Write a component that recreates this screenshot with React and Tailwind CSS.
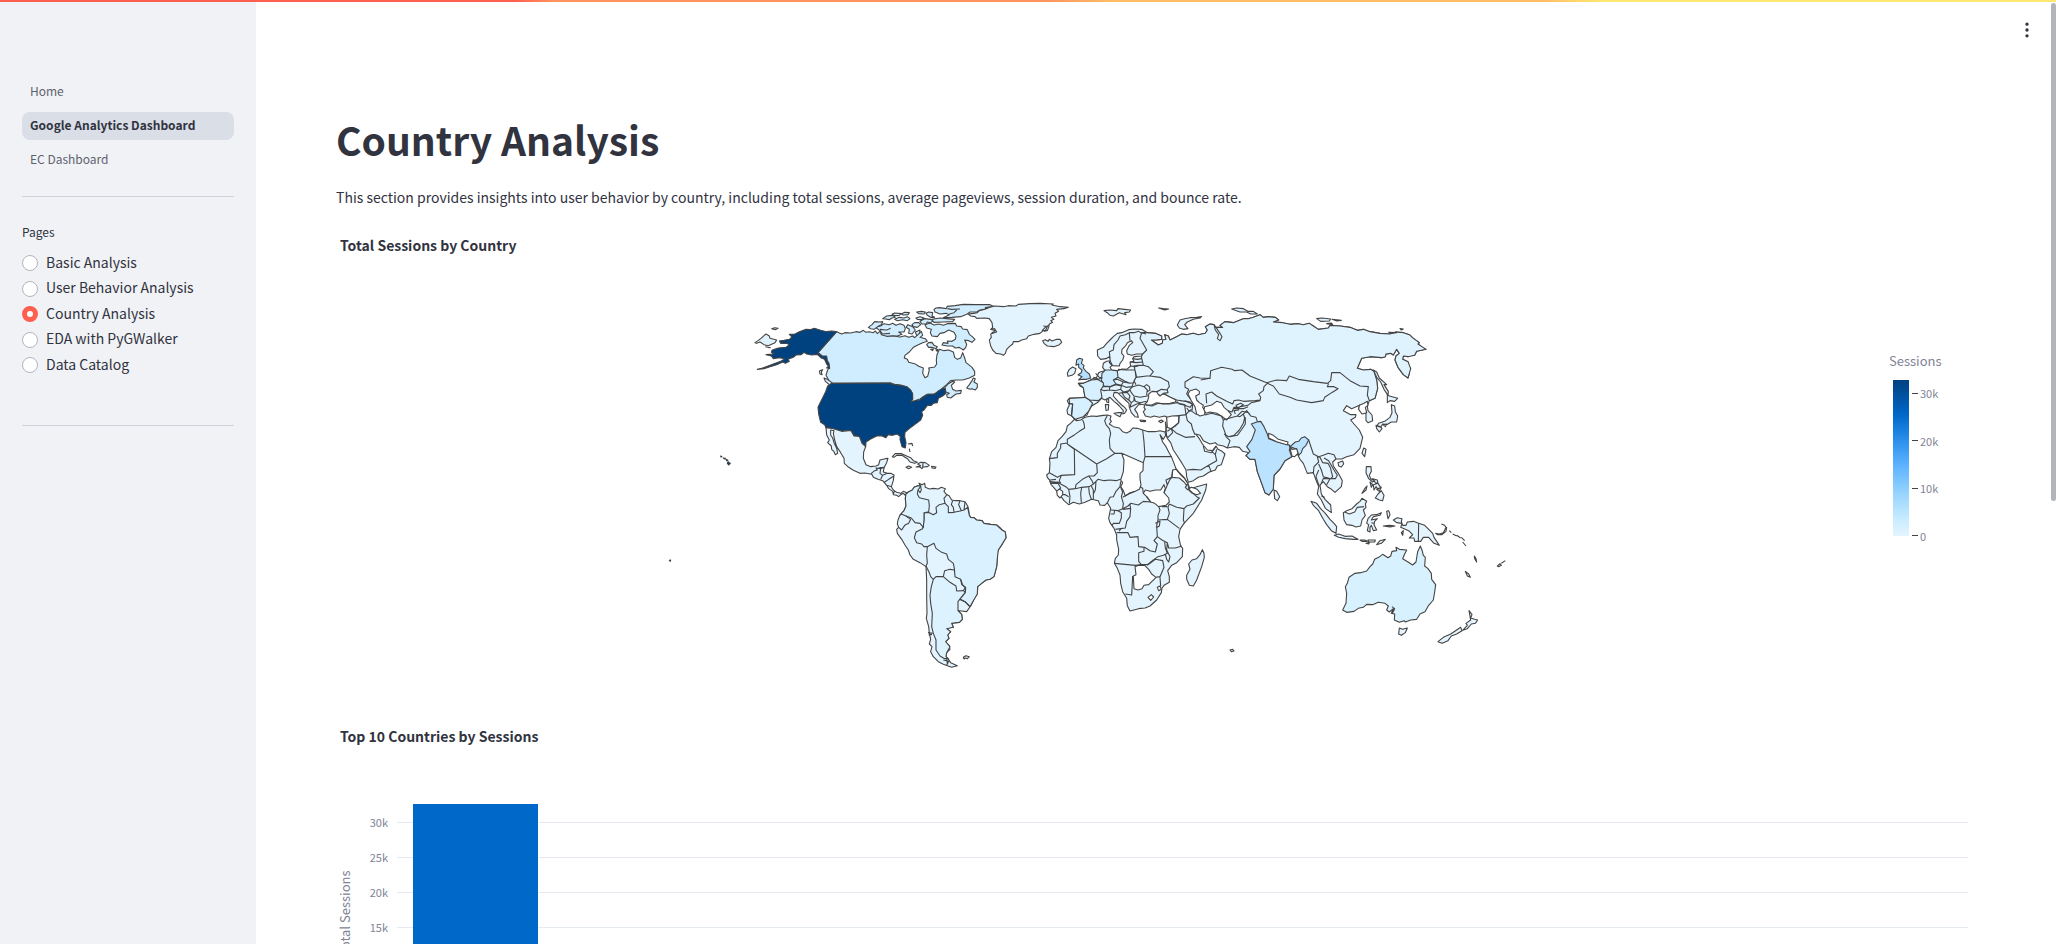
import React, { useState } from 'react';
import { MoreVertical } from 'lucide-react';

const LAND = '#e3f4ff';
const RUSSIA = '#dff3ff';
const BRAZIL = '#daf1ff';
const CANADA = '#d0edff';
const INDIA = '#bbe2ff';
const UK = '#b5dfff';
const GERMANY = '#cdebff';
const USA = '#004280';
const EMPTY = '#ffffff';

// Every region has its own origin on the map; paths are in thirds of a pixel.
const regions = [
  {
    name: 'arctic',
    x: 860,
    y: 290,
    shapes: [
      [CANADA, 'M222 58L228 54L240 53L258 56L262 49L285 47L310 43L345 44L390 44L400 49L376 53L384 56L360 60L350 66L330 66L322 72L302 80L275 82L250 83L268 74L258 70L240 72L225 66Z M262 56L275 58L300 57 M268 72L282 68L290 60'],
      [CANADA, 'M195 104L210 99L222 105L236 102L250 106L262 101L286 100L290 108L304 110L308 117L322 119L328 133L336 139L345 148L336 157L326 152L314 150L320 163L317 173L310 180L298 172L286 174L278 168L262 168L246 165L250 158L264 160L262 153L276 154L286 148L288 138L282 127L266 120L252 128L240 130L232 140L216 138L211 128L214 118L200 114Z'],
      [CANADA, 'M45 111L62 108L72 101L88 104L98 100L108 106L120 101L132 106L136 116L132 126L116 126L126 133L112 138L95 138L82 140L62 138L66 130L60 122Z M60 118L80 120L92 115 M66 132L90 130'],
      [CANADA, 'M25 112L36 104L44 95L60 96L68 95L64 104L56 108L42 118L32 116Z'],
      [CANADA, 'M68 86L80 78L98 76L106 82L96 84L88 89L76 87Z M96 73L104 69L124 71L118 76L104 77Z M124 72L134 67L148 68L144 74L130 75Z M104 88L118 82L132 84L142 80L150 86L142 92L128 89L112 92Z M170 66L184 64L196 66L192 72L176 71Z M198 70L206 66L218 68L216 78L224 82L212 82L202 76Z M168 84L180 80L192 84L184 89L172 88Z M156 104L164 98L176 98L182 104L172 112L160 110Z M180 94L194 86L212 88L220 92L212 98L202 96L198 102L186 102Z M144 104L158 110L166 120L156 132L146 130L148 118L138 112Z M166 126L180 120L178 134L170 137Z'],
      [CANADA, 'M215 88L240 84L260 86L284 88L278 95L250 96L222 97Z'],
      [CANADA, 'M200 164L206 158L216 157L222 166L232 170L228 176L216 172L206 172Z M212 178L220 177L218 182Z M228 180L234 178L232 184Z'],
    ],
  },
  {
    name: 'north-america',
    x: 660,
    y: 290,
    shapes: [
      [CANADA, 'M530 125L538 129L545 132L555 128L572 129L588 125L600 127L610 121L618 127L628 125L640 128L646 123L652 131L660 124L664 134L680 139L700 138L720 141L735 137L746 142L758 138L764 143L774 134L784 124L788 136L780 142L796 146L802 154L788 158L775 164L760 172L748 186L735 196L733 204L742 208L746 217L764 221L776 229L790 234L788 250L795 263L803 259L808 240L806 234L824 231L830 222L829 210L831 194L838 178L852 182L866 180L880 186L884 202L892 208L902 204L908 188L914 204L918 218L926 224L936 232L944 244L944 256L928 264L908 270L890 270L872 272L860 284L848 294L840 304L820 313L800 313L780 327L752 337L758 325L756 308L740 290L725 286L708 284L692 279L515 280L506 270L498 256L503 240L508 234L499 215L486 198L474 188Z'],
      [CANADA, 'M845 296L854 294L864 282L878 274L884 276L874 286L878 298L888 303L904 301L902 310L888 312L872 324L862 322L860 314L868 310L858 306Z'],
      [CANADA, 'M920 294L928 284L936 272L940 264L946 266L942 276L952 282L952 292L946 300L936 296L930 298Z'],
      [CANADA, 'M492 264L502 268L516 278L518 287L508 284L496 274Z M478 243L488 239L484 246L486 254L480 252Z'],
      [USA, 'M530 125L514 123L500 125L482 121L463 115L450 119L438 118L418 125L405 132L388 133L396 141L388 148L372 151L358 153L362 160L380 160L388 164L378 172L355 174L337 180L334 187L342 192L318 194L334 198L340 206L358 203L374 206L362 214L350 218L330 226L305 235L292 238L312 236L330 230L350 224L368 216L376 220L388 214L384 208L400 202L408 195L424 194L432 187L440 192L455 195L472 193L484 204L494 208L500 222L506 228L500 234L509 235L507 220L502 212L500 198L486 198L474 188Z'],
      [USA, 'M515 280L692 279L696 283L708 284L725 287L740 290L752 300L758 312L758 328L752 337L766 332L780 330L790 320L805 313L825 312L835 303L845 297L856 295L858 310L848 318L835 325L832 338L820 340L814 346L802 346L792 360L785 365L788 376L782 390L765 403L745 418L735 427L734 440L738 458L736 474L726 470L720 448L721 440L712 432L698 436L684 434L678 443L664 437L650 438L632 447L618 456L617 470L608 463L600 443L590 437L585 442L575 424L562 422L545 424L515 415L498 413L494 404L482 397L476 372L474 352L482 335L497 305L503 288Z'],
      [LAND, 'M498 413L515 415L545 424L572 421L582 438L598 439L606 460L617 470L611 486L610 505L618 524L632 530L648 528L656 524L660 510L676 506L684 505L680 518L672 533L660 533L652 538L642 552L630 552L615 549L600 550L580 541L566 532L553 520L552 505L542 488L530 470L524 450L520 430L522 422L512 420L512 435L518 444L522 458L530 475L533 490L526 494L522 485L515 478L514 468L503 458L508 450L500 435Z'],
      [RUSSIA, 'M285 158L294 152L303 145L312 137L318 132L328 138L330 145L350 150L345 158L325 167L312 164L300 156L290 160Z M335 116L344 113L354 115L346 119Z M316 170L324 172L332 173'],
    ],
  },
  {
    name: 'central-america',
    x: 640,
    y: 420,
    shapes: [
      [LAND, 'M694 160L704 152L712 150L708 144L722 146L732 142L730 156L742 160L752 160L762 165L760 182L754 200L760 210L770 217L782 220L790 214L800 218L798 228L790 220L782 224L776 230L770 226L760 224L758 214L746 206L740 196L728 182L714 178L700 172Z M722 146L720 160L728 166L722 178 M728 166L742 160 M734 186L746 178L762 168 M740 196L755 200 M764 212L760 222'],
      [LAND, 'M757 110L766 101L785 101L800 108L812 113L820 122L832 127L824 130L810 126L802 116L786 106L770 106L762 112Z'],
      [LAND, 'M833 132L842 127L856 128L868 136L862 140L850 141L846 146L840 141L828 141L842 137Z M849 129L848 142'],
      [LAND, 'M798 142L806 138L815 142L806 146Z M875 139L888 141L886 145L876 144Z M804 72L816 70L818 78 M808 86L810 96'],
      [USA, 'M242 108L246 110L243 111Z M250 114L256 115L254 117Z M258 118L264 121L260 122Z M264 125L271 130L266 135L262 130Z'],
      [EMPTY, 'M88 421L92 420L91 424Z'],
    ],
  },
  {
    name: 'south-america',
    x: 800,
    y: 470,
    shapes: [
      [LAND, 'M318 72L325 66L337 60L342 52L354 47L362 49L357 40L366 44L374 40L376 52L388 57L400 55L415 57L424 52L436 56L432 64L438 72L448 78L455 90L466 92L480 92L495 95L503 108L506 120L508 136L512 142L522 143L530 150L546 152L552 160L572 163L590 165L600 173L606 180L616 186L618 203L608 220L595 240L592 250L592 265L590 290L582 320L570 328L558 330L545 340L533 350L532 372L524 382L520 392L512 408L500 425L484 423L474 422L485 433L487 448L478 457L460 458L455 460L460 472L448 472L440 476L452 485L443 495L447 505L437 515L436 522L447 526L450 538L440 548L438 560L444 566L452 578L472 587L455 592L430 583L415 575L400 560L392 545L396 530L388 522L392 508L388 490L386 470L379 445L381 430L380 380L380 330L378 290L360 278L340 268L330 255L325 240L315 225L305 208L292 190L290 178L296 172L292 162L294 150L300 135L312 122L318 108L316 85Z'],
      [BRAZIL, 'M372 128L388 128L400 134L410 128L408 112L418 104L435 100L445 110L445 128L462 127L484 122L492 120L503 112L508 136L512 142L522 143L530 150L546 152L552 160L572 163L590 165L606 180L616 186L618 203L608 220L595 240L592 265L590 290L582 320L570 328L558 330L545 340L533 350L532 372L520 392L510 410L495 395L480 387L496 368L497 354L488 345L482 328L465 320L463 295L460 280L445 268L440 252L425 247L408 235L402 220L382 230L372 230L365 222L350 218L343 203L348 186L368 176L372 150Z'],
      ['#dcf2ff', 'M318 72L325 66L337 60L342 52L354 47L362 49L354 60L352 72L358 83L386 90L388 108L386 125L372 128L372 150L370 172L360 160L345 158L334 144L318 138L305 133L300 135L312 122L318 108L316 85Z'],
      ['#dcf2ff', 'M400 328L408 320L430 320L450 337L468 348L470 363L490 362L496 366L474 395L474 422L485 433L487 448L478 457L455 460L460 472L440 476L452 485L443 495L447 505L437 515L450 530L440 548L438 560L444 566L434 566L420 558L408 540L408 510L400 490L395 470L397 430L392 400L390 375L394 350Z'],
      ['none', 'M296 172L305 180L314 166L326 160L332 148L318 138 M382 230L380 255L382 280L378 288L388 308L392 320L400 328 M430 320L434 302L450 298L463 300 M482 328L485 343L497 352L490 362 M478 388L495 395L508 408 M435 100L432 85L440 75 M458 92L454 104L460 112L462 127 M480 92L476 104L484 122 M495 96L492 120 M440 566L442 582 M430 570L446 574L440 586 M384 488L398 490 M386 494L396 494 M362 49L364 60L360 68L354 60'],
      [LAND, 'M490 562L498 557L508 560L502 566L496 564L492 567Z'],
    ],
  },
  {
    name: 'greenland',
    x: 960,
    y: 290,
    shapes: [
      [LAND, 'M25 72L40 70L52 68L58 62L75 58L90 52L104 48L130 50L145 47L168 48L175 43L210 41L240 40L280 42L276 45L300 50L325 52L312 56L290 58L296 64L285 70L288 78L274 82L282 88L272 92L278 97L268 102L266 112L262 122L250 122L240 130L222 133L205 138L200 146L185 150L175 155L160 155L158 162L148 170L140 178L136 190L130 196L122 192L108 190L98 180L92 168L88 150L94 142L92 132L110 126L104 116L92 118L98 112L96 98L88 86L75 84L50 85L45 80L32 78Z M92 118L106 122L94 130 M246 122L256 112L268 104 M250 108L262 110L254 126'],
      [LAND, 'M248 152L256 149L264 154L268 148L276 153L290 148L300 148L305 157L298 164L282 170L262 168L252 160Z'],
    ],
  },
  {
    name: 'eurasia',
    x: 1030,
    y: 290,
    shapes: [
      [LAND, 'M202 180L203 198L212 208L228 206L238 200L242 216L248 227L268 228L270 220L278 210L282 198L275 190L276 178L288 166L292 158L304 152L308 158L298 166L290 182L292 192L305 196L320 192L338 192L334 198L312 200L308 206L312 214L300 216L302 228L290 238L276 237L262 242L245 240L240 232L246 226L238 218L240 212L230 214L220 220L218 232L225 242L212 245L206 248L200 262L185 268L170 276L160 280L145 280L150 288L160 293L162 305L165 322L150 325L134 324L118 325L112 332L118 345L111 360L113 372L125 378L136 390L142 384L160 380L172 374L175 365L185 348L205 336L214 325L225 330L240 322L252 334L262 342L268 348L280 362L278 372L284 370L290 360L284 352L275 345L264 334L250 318L252 308L262 308L275 320L286 330L297 340L298 352L304 368L315 380L325 382L322 370L314 358L328 342L345 345L342 352L346 358L340 365L346 378L362 382L372 378L388 382L404 378L411 382L412 400L408 420L405 428L412 445L422 458L430 480L442 498L455 518L468 540L470 560L475 577L490 572L505 562L520 558L538 546L556 540L562 528L574 524L585 492L576 484L564 478L558 468L548 482L532 480L522 468L516 460L508 446L497 432L510 436L520 452L540 462L556 458L562 464L580 468L592 474L612 470L628 472L638 484L658 488L648 497L660 508L675 508L682 545L695 580L705 608L717 615L730 597L732 556L750 537L765 512L785 500L802 492L810 508L820 520L832 550L850 548L858 570L866 590L862 612L874 630L886 655L904 668L902 645L885 628L874 612L870 585L880 575L892 590L902 596L915 607L934 590L937 572L925 550L910 528L908 516L918 507L935 507L950 500L972 494L990 475L998 442L988 420L972 402L962 390L976 382L978 374L962 374L940 362L950 347L965 356L990 345L986 356L1008 370L1008 392L1014 398L1028 392L1026 375L1014 362L1012 348L1018 332L1035 325L1043 295L1040 270L1032 244L1022 238L1000 240L982 235L995 205L1020 200L1055 203L1066 200L1068 192L1082 190L1090 195L1100 178L1108 190L1098 198L1095 210L1104 232L1120 254L1134 264L1138 250L1134 246L1142 236L1136 228L1134 215L1118 208L1120 198L1134 200L1142 195L1154 196L1160 184L1188 178L1174 172L1164 162L1168 158L1150 145L1138 134L1120 128L1098 126L1080 132L1050 130L1020 125L1000 118L982 121L960 112L930 108L900 106L895 114L865 118L850 108L838 100L820 104L805 101L780 103L758 98L730 96L746 90L736 82L715 80L700 82L690 74L670 82L655 86L640 86L610 98L585 95L570 106L578 112L558 112L552 104L540 102L526 110L532 120L526 130L505 134L490 130L470 134L455 132L440 140L420 150L415 138L404 134L408 148L398 150L397 160L385 165L364 150L378 150L395 148L395 138L376 130L352 128L335 118L312 117L296 119L275 128L262 130L250 140L240 150L230 160L220 172Z'],
      [RUSSIA, 'M335 128L330 145L350 180L338 192L334 200L340 226L355 230L370 245L360 258L390 262L415 275L418 290L410 300L400 310L420 322L440 330L466 334L488 342L495 340L480 325L470 312L476 298L465 292L465 276L490 260L510 264L540 265L542 242L575 232L606 238L614 242L636 240L660 258L710 278L740 270L770 272L778 258L805 268L850 275L892 280L902 272L905 248L930 248L960 272L990 288L1015 290L1012 315L1018 332L1035 325L1043 295L1040 270L1032 244L1022 238L1000 240L982 235L995 205L1020 200L1055 203L1066 200L1068 192L1082 190L1090 195L1100 178L1108 190L1098 198L1095 210L1104 232L1120 254L1134 264L1138 250L1142 236L1134 215L1118 208L1120 198L1134 200L1154 196L1160 184L1188 178L1164 162L1168 158L1150 145L1138 134L1120 128L1098 126L1080 132L1050 130L1020 125L1000 118L982 121L960 112L930 108L900 106L895 114L865 118L850 108L838 100L820 104L805 101L780 103L758 98L730 96L746 90L736 82L715 80L700 82L690 74L670 82L655 86L640 86L610 98L585 95L570 106L578 112L558 112L570 130L576 140L570 152L562 146L566 134L556 120L552 104L540 102L526 110L532 120L526 130L505 134L490 130L470 134L455 132L440 140L420 150L415 138L404 134L408 148L398 150L397 160L385 165L364 150L378 150L395 148L395 138L376 130L352 128Z'],
      [EMPTY, 'M352 335L356 322L356 312L366 304L378 305L385 303L386 314L402 312L418 320L438 330L436 336L420 340L400 342L380 338L365 345L350 345L345 342Z'],
      [LAND, 'M380 306L394 298L412 300L414 308L400 310L390 318L384 312Z'],
      [EMPTY, 'M474 312L480 302L498 297L508 304L508 312L497 318L500 330L508 338L520 346L518 352L525 362L524 374L510 378L500 372L495 350L484 332Z'],
      [EMPTY, 'M524 350L545 345L560 334L574 338L582 352L594 362L604 374L590 390L574 378L560 370L540 366L528 370L522 360Z'],
      [EMPTY, 'M410 382L426 378L447 377L446 398L436 408L422 416L412 412Z'],
      [EMPTY, 'M988 346L1002 340L1012 334L1014 346L1006 352L1010 368L996 372L986 358Z'],
      [INDIA, 'M678 397L692 394L702 410L712 432L716 446L740 455L776 464L780 470L796 456L806 454L814 444L824 440L836 450L828 466L818 476L814 488L806 496L800 478L782 470L778 480L785 500L765 512L750 537L732 556L730 597L717 615L705 608L695 580L682 545L675 508L660 508L648 497L660 484L650 470L666 448L676 420L664 402Z'],
      [EMPTY, 'M716 430L730 436L745 448L774 456L772 465L740 455L716 444Z M778 466L786 478L800 476L804 490L794 500L786 498Z'],
      [GERMANY, 'M216 250L226 240L244 240L262 243L264 262L250 270L258 282L240 290L222 288L214 270Z'],
      ['#d6f0ff', 'M145 280L160 280L184 270L202 268L220 278L220 288L212 300L216 322L205 332L178 330L165 322L162 305L160 293Z'],
      ['#d6f0ff', 'M118 325L165 322L178 330L188 340L175 365L160 380L136 388L125 378L128 342L118 342Z'],
      [UK, 'M140 210L148 205L158 208L154 220L162 226L160 234L168 244L178 252L182 264L170 268L158 268L146 270L156 260L144 254L154 248L156 240L146 232L146 222L138 226Z'],
      [LAND, 'M118 238L128 231L138 236L134 250L126 256L114 259L112 250Z'],
      ['none', 'M240 205L238 185L250 180L252 164L264 150L270 138L286 134L298 128L312 128L326 124L335 130 M298 130L300 152 M335 128L348 132 M118 340L128 342L124 376 M197 250L208 262L218 264 M190 262L206 268L216 262 M264 238L290 240L315 240L318 262L310 278L300 280L285 274L264 262 M250 270L262 268L280 276L274 286L258 282 M280 276L300 280L310 278L306 290L288 292L274 286 M218 290L240 290L238 300L222 302L212 298 M240 290L258 284L274 288L272 298L256 302L238 300 M272 298L280 306L296 302L308 290 M308 290L326 285L342 290L352 300L350 312L352 318L330 322L312 318L304 308L300 300 M342 290L350 284L358 290L360 300L350 306 M318 262L312 272L318 284 M318 262L350 258L360 258 M315 240L312 228L324 226L340 226 M320 262L316 244 M308 206L322 208L336 206 M300 216L318 218L338 216 M302 228L316 230L330 226 M312 320L316 334L330 338L350 334 M300 300L290 308L276 308L266 310 M276 308L284 322L296 330L300 318L292 308 M296 330L304 338L312 332L312 320 M304 338L300 352L308 348L320 342L330 340 M330 340L330 346 M348 345L366 348L385 340L420 342L440 338L466 344 M440 334L448 342L464 346L468 374L447 377 M464 346L480 352L486 344 M464 332L480 336L488 344L486 362 M470 354L478 364L484 358 M468 374L478 362L486 364L500 374 M468 374L472 392L484 402L488 418L495 434 M447 377L446 398L424 416L412 424 M424 416L440 430L466 442L495 440 M424 416L428 428L414 442L408 438 M406 395L410 440 M470 540L490 538L512 540L536 526L544 546 M536 526L560 512L556 494L545 484 M556 494L560 478 M520 468L524 484L544 488L558 470 M525 375L545 370L574 378L580 390L578 408L586 430L588 440L600 452L592 474'],
      ['none', 'M580 390L600 384L622 378L630 380L640 372L644 384L640 400L628 420L612 436L596 440L582 432 M540 265L512 270 M530 340L528 312L545 306L560 318L590 334L608 342L612 332L626 330L640 334L676 332L690 330 M594 362L606 366L612 352L628 352L640 344L632 340L618 346L626 360L612 362L616 372 M632 350L654 346L664 338L690 332L692 322L686 312L700 302L702 290L712 280 M640 372L650 362L662 378L678 382L682 394L694 396 M646 382L646 402L634 420L622 436L600 440 M610 356L640 356L654 350 M622 378L636 364L656 368L662 378 M712 280L730 288L748 312L780 322L800 330L845 338L880 332L884 322L905 308L924 296L912 290L892 290L896 280 M836 450L844 474L850 492L866 500L880 496L895 490L912 494L918 507 M850 550L852 530L866 516L862 500L870 502L878 518L894 520L902 535L904 545L908 560L902 566L880 560L874 540L866 522 M874 580L880 565L900 566L890 584 M902 566L916 566L922 556L912 540L896 512L882 504 M866 540L858 560L868 590 M874 618L884 622'],
      [LAND, 'M442 105L450 90L464 86L480 83L500 82L515 80L510 84L490 88L472 96L464 104L474 116L460 118L448 114Z M222 62L240 60L260 62L264 56L284 58L302 60L298 66L284 68L288 74L268 68L250 78L240 76L232 68Z M386 54L400 56L416 57L404 60Z'],
      [LAND, 'M252 370L262 368L275 368L270 380L258 374Z M226 344L236 344L235 360L228 361Z M230 328L236 326L236 338L230 336Z M330 390L347 392L346 395L332 394Z M386 394L394 390L400 394L392 398Z'],
    ],
  },
  {
    name: 'africa',
    x: 1030,
    y: 290,
    shapes: [
      [LAND, 'M133 388L140 392L152 390L165 382L185 378L200 379L220 376L232 375L243 378L240 388L244 394L238 402L250 410L268 414L278 425L290 429L300 424L308 414L322 415L338 420L355 425L375 425L390 422L405 426L407 436L400 448L390 434L398 456L408 470L418 490L425 502L432 520L438 536L450 550L462 562L474 582L480 596L500 590L530 582L527 600L515 630L490 670L462 700L450 718L446 740L452 768L458 775L457 800L440 818L425 826L413 842L418 860L418 877L402 886L396 894L394 908L380 930L360 948L345 954L326 956L300 963L292 947L290 925L278 905L272 880L270 855L262 835L253 820L256 805L265 795L266 778L260 750L260 735L252 715L240 698L236 685L240 665L242 655L232 638L224 646L210 645L205 632L185 628L165 637L148 642L130 637L116 644L102 632L88 612L76 598L62 582L60 572L52 562L50 555L58 548L60 520L58 507L65 485L78 472L84 452L96 440L108 425L112 408L124 398Z'],
      [EMPTY, 'M275 490L340 518L339 542L330 550L330 566L333 585L328 598L316 604L300 608L286 618L280 602L272 590L278 578L272 570L280 545L282 510Z'],
      [EMPTY, 'M346 600L360 604L376 600L392 600L402 584L406 596L402 608L416 624L418 636L408 646L386 650L374 640L362 636L350 620L340 610Z'],
      [EMPTY, 'M428 540L438 538L450 552L464 566L474 582L470 586L462 576L448 564L426 562Z'],
      [EMPTY, 'M475 598L484 592L500 597L512 610L500 614L484 608Z'],
      [EMPTY, 'M315 830L326 826L344 826L356 838L365 852L378 862L366 874L356 884L342 886L336 896L324 900L312 896L310 858L318 854Z'],
      [EMPTY, 'M354 922L364 914L371 921L362 931Z M382 892L390 888L394 898L386 902Z'],
      [EMPTY, 'M80 604L88 597L98 604L98 614L90 624L82 616Z'],
      ['none', 'M158 390L162 400L164 414L148 424L134 434L112 448L112 462 M112 459L92 462L92 474L82 490L82 503L58 506 M112 462L200 522L230 506L255 490L275 490 M112 462L133 478L134 554L94 556L82 562L58 548 M94 556L88 572L92 580 M232 376L224 392L228 404L238 416L242 430L238 450L240 475L248 484L255 490 M338 420L342 455L345 500L340 518 M345 500L425 500 M200 522L202 548L192 558L176 558L160 566L150 574L138 584L136 596 M176 558L186 572L190 582L178 590L155 592L136 596L116 598L110 592L92 582L84 576L62 578 M155 592L152 610L154 638 M176 590L178 610L184 628 M184 588L190 600L190 628 M190 582L198 574L204 568L222 572L240 570L258 572L272 568 M198 574L196 600L190 612L190 628 M272 574L270 590L258 604L250 620L240 622L232 638 M116 598L120 620L118 640 M60 570L78 568 M58 575L76 576 M62 580L84 580L92 594L88 598 M98 614L106 614L116 620 M272 592L278 606L274 620L280 640L278 656L264 662L242 660'],
      ['none', 'M278 622L296 612L316 604 M340 610L338 595L330 590 M350 620L362 636L340 634L325 645L302 640L294 648L278 656 M412 585L408 570L425 562L428 540 M402 608L412 585L420 568L426 562 M474 586L478 600L500 620L508 624L490 642L470 648L462 656L440 652L418 642 M470 586L466 592L474 600 M462 656L460 690L464 700 M418 642L414 652L418 670L412 688L448 715 M386 650L390 660L384 676L384 690L412 688 M412 650L396 650 M376 700L390 694L388 708L378 714 M384 690L380 706L382 740L396 750L412 758L416 774L436 774L456 768 M382 740L372 752L382 762L376 786L360 782L344 772L326 770L324 740L300 742L294 728L260 728 M256 718L272 716L286 714L290 694L300 680L302 655L300 645L302 640 M278 658L302 655 M242 672L252 672L254 662 M264 662L274 668L274 684L268 700L250 700L246 708 M272 716L268 724 M342 772L342 784L326 788L326 814L334 824L316 826L254 820 M334 824L352 824L370 810L384 800L400 796L412 790L406 774L404 756 M412 758L410 780L420 800L416 816L410 808L406 792 M352 826L376 808L398 812L402 832L390 860L378 862 M390 862L392 888 M308 858L305 915L286 912'],
      [LAND, 'M517 779L522 790L523 802L515 830L500 870L490 888L478 886L470 868L470 856L480 838L476 822L486 810L500 806L510 794Z'],
      [LAND, 'M600 1080L608 1078L612 1083L604 1085Z'],
    ],
  },
  {
    name: 'asia-pacific',
    x: 1230,
    y: 290,
    shapes: [
      [RUSSIA, 'M5 57L20 54L40 56L54 64L70 64L82 72L62 72L50 66L30 66Z M260 86L276 84L302 87L298 93L272 94Z M306 88L334 91L320 93Z M290 101L304 99L308 104Z M510 116L520 117L514 120Z M476 127L500 128L484 130Z'],
      [RUSSIA, 'M430 240L440 246L448 264L470 284L462 284L475 304L474 316L462 298L452 276L440 262Z'],
      [LAND, 'M472 314L478 318L503 325L494 334L480 332L472 338Z M484 344L494 348L496 365L503 378L500 396L484 396L470 404L458 402L452 412L440 408L446 400L464 394L480 382L486 368Z M438 406L452 410L456 416L448 426L440 416Z M458 404L470 402L466 410Z'],
      [LAND, 'M132 600L140 604L149 620L142 632L134 626Z M324 518L338 513L341 522L334 531L326 528Z M401 474L408 478L404 500L396 490Z'],
      [LAND, 'M409 530L423 530L424 544L418 556L422 566L434 572L428 576L416 566L408 548Z M428 566L442 570L444 580L436 578Z M420 576L428 584L424 592Z M430 584L444 580L452 592L444 598L438 590L432 600Z M440 598L454 592L448 604Z M444 612L454 602L462 616L458 632L448 630L436 624Z M396 610L404 596L411 588L408 600Z'],
      [LAND, 'M243 634L260 640L272 656L286 670L300 688L312 700L320 710L318 730L304 722L290 704L280 688L266 662L250 646Z M313 736L326 732L345 739L366 738L384 748L370 748L346 746L326 742Z M390 750L404 750L412 754L396 754Z M414 750L436 750L434 756L416 756Z M440 764L450 752L466 748L454 760Z M408 760L418 758L416 762Z'],
      [LAND, 'M340 668L350 662L366 656L380 642L390 634L396 625L410 634L406 642L408 652L400 660L406 676L396 690L392 708L378 711L366 706L350 704L342 690Z M344 666L358 672L374 666L382 652L402 650'],
      [LAND, 'M414 686L424 675L440 674L454 668L450 676L430 680L424 690L442 686L434 694L432 704L440 720L430 722L424 706L420 712L420 726L412 722L416 704L410 700Z M470 664L476 662L480 674L474 686L472 676Z M460 708L478 706L495 708L480 711Z M514 728L520 722L518 736Z M432 700L424 698'],
      [LAND, 'M490 690L502 683L516 686L514 694L518 706L528 706L532 696L550 694L566 700L584 706L594 716L608 730L612 742L628 766L612 760L596 742L580 742L572 754L554 754L552 744L538 744L548 734L536 722L512 712L516 700L500 698Z M566 700L565 756'],
      [LAND, 'M617 730L628 732L640 728L646 716L650 712L648 724L636 734L622 734Z M634 702L644 706L650 716 M658 722L664 728 M668 732L680 738 M680 736L692 744 M694 742L704 752 M698 756L708 768 M733 798L738 806L740 816L734 806Z M706 844L716 852L721 862L712 858Z M802 828L810 821L814 826L806 830Z M814 820L826 812'],
      ['#d8f1ff', 'M357 862L375 850L392 848L410 843L420 830L428 822L434 808L446 802L458 793L474 803L482 798L486 784L500 782L498 772L508 778L530 780L524 792L518 806L534 816L548 825L558 816L563 785L571 768L576 780L580 796L586 802L584 828L594 836L604 850L605 868L617 884L614 906L610 930L596 946L585 965L570 972L560 988L542 990L526 996L522 992L508 997L493 990L494 972L484 970L490 956L478 966L470 960L475 948L465 940L445 937L428 944L410 943L400 952L385 955L372 964L350 967L338 960L348 940L350 910L346 890L352 880Z M486 950L494 956L486 972'],
      [LAND, 'M508 1014L518 1018L532 1014L526 1028L514 1036L506 1032Z'],
      [LAND, 'M717 962L726 974L722 984L734 988L743 990L736 1000L724 1002L712 1016L698 1021L712 1006L708 1000L722 990Z M692 1012L696 1022L680 1032L664 1038L654 1052L636 1060L624 1055L640 1042L662 1032L680 1020Z'],
    ],
  },
];

const WorldMap = () => (
  <svg viewBox="640 290 900 400" role="img" aria-label="Total sessions by country" className="h-[400px] max-w-[900px] flex-1">
    {regions.map(region => (
      <g
        key={region.name}
        transform={`translate(${region.x} ${region.y}) scale(0.33333)`}
        stroke="#444444"
        strokeWidth="3.3"
        strokeLinejoin="round"
      >
        {region.shapes.map(([fill, d]) => (
          <path key={d} fill={fill} d={d} />
        ))}
      </g>
    ))}
  </svg>
);

const ColorBar = () => (
  <div className="w-[124px] pl-[45px] pt-[60px] text-[#808495]">
    <p className="text-[13px] leading-[22px]">Sessions</p>
    <div className="flex pl-1 pt-2">
      <div className="h-[156px] w-4 bg-[linear-gradient(to_top,#e4f5ff,#c7ebff,#a6dcff,#83c9ff,#60b4ff,#3d9df3,#1c83e1,#0068c9,#0054a3,#004280)]" />
      <ul className="flex h-[166px] flex-col justify-between pl-[3px] pt-[3px] text-[11px] leading-5">
        {['30k', '20k', '10k', '0'].map(tick => (
          <li key={tick} className="flex items-center gap-[2px]">
            <span className="h-px w-[6px] bg-[#444444]" />
            {tick}
          </li>
        ))}
      </ul>
    </div>
  </div>
);

const BarChart = () => (
  <div className="flex pt-[57px]">
    <p className="h-[164px] w-[18px] rotate-180 pb-[52px] text-center text-[13px] leading-[18px] text-[#808495] [writing-mode:vertical-rl]">
      <span className="whitespace-nowrap">Total Sessions</span>
    </p>
    <div className="relative flex-1">
      {['30k', '25k', '20k', '15k', '10k', '5k', '0'].map(tick => (
        <div key={tick} className="flex h-[35px] items-center gap-[9px]">
          <span className="w-[34px] text-right text-[11px] text-[#808495]">{tick}</span>
          <span className="h-px flex-1 bg-[#e6eaf1]" />
        </div>
      ))}
      <div className="absolute -top-px bottom-[17px] left-[59px] w-[125px] bg-[#0068c9]" />
    </div>
  </div>
);

const links = ['Home', 'Google Analytics Dashboard', 'EC Dashboard'];
const pages = ['Basic Analysis', 'User Behavior Analysis', 'Country Analysis', 'EDA with PyGWalker', 'Data Catalog'];

const Sidebar = () => {
  const [page, setPage] = useState('Country Analysis');

  return (
    <aside className="w-64 shrink-0 bg-[#f0f2f6] px-[22px] pt-[78px]">
      <nav className="flex flex-col gap-[6px]">
        {links.map(link => (
          <a
            key={link}
            href="#"
            className={
              link === 'Google Analytics Dashboard'
                ? 'rounded-lg bg-[#dadee7] px-2 pb-[2px] text-[12px] leading-[26px] font-bold text-[#31333f]'
                : 'rounded-lg px-2 pb-[2px] text-[12px] leading-[26px] text-[#5f626d]'
            }
          >
            {link}
          </a>
        ))}
      </nav>
      <hr className="mt-[22px] border-[#cfd1d8]" />
      <fieldset className="mt-[25px]">
        <legend className="text-[12px] leading-5">Pages</legend>
        <div className="mt-[9px] flex h-[126px] flex-col justify-between">
          {pages.map(name => (
            <label key={name} className="flex h-6 items-center gap-2 text-[14px]">
              <input
                type="radio"
                name="page"
                value={name}
                checked={page === name}
                onChange={() => setPage(name)}
                className="h-4 w-4 appearance-none rounded-full border border-[#b2b5bd] bg-white checked:border-[5px] checked:border-[#ff5f4f]"
              />
              <span className="pb-[2px]">{name}</span>
            </label>
          ))}
        </div>
      </fieldset>
      <hr className="mt-12 border-[#cfd1d8]" />
    </aside>
  );
};

const App = () => {
  return (
    <div className="relative flex h-screen overflow-hidden bg-white font-['Noto_Sans_CJK_JP','Noto_Sans',sans-serif] text-[#31333f]">
      <div className="absolute inset-x-0 top-0 h-[2px] bg-[linear-gradient(90deg,#ff5f4f_25%,#ff9460_27%,#ff9460_51%,#ffbd66_54%,#ffbd66_75%,#ffe872_78%)]" />
      <Sidebar />
      <main className="min-w-0 flex-1 overflow-y-auto pr-[88px] pl-20 pt-[113px] [scrollbar-width:none]">
        <h1 className="text-[39px] leading-[53px] font-bold">Country Analysis</h1>
        <p className="mt-[19px] text-[14px] leading-6">
          This section provides insights into user behavior by country, including total sessions, average pageviews, session duration, and bounce rate.
        </p>
        <section className="pt-6">
          <h2 className="pl-1 text-[14px] leading-6 font-bold">Total Sessions by Country</h2>
          <div className="mt-[33px] flex">
            <div className="flex flex-1 justify-center">
              <WorldMap />
            </div>
            <ColorBar />
          </div>
        </section>
        <section className="pt-[34px]">
          <h2 className="pl-1 text-[14px] leading-6 font-bold">Top 10 Countries by Sessions</h2>
          <BarChart />
        </section>
      </main>
      <button type="button" aria-label="Main menu" className="absolute top-5 right-[19px]">
        <MoreVertical size={20} />
      </button>
      <div className="absolute top-[3px] right-0 h-[498px] w-[5px] rounded-full bg-[#b3b5ba]" />
    </div>
  );
};

export default App;
